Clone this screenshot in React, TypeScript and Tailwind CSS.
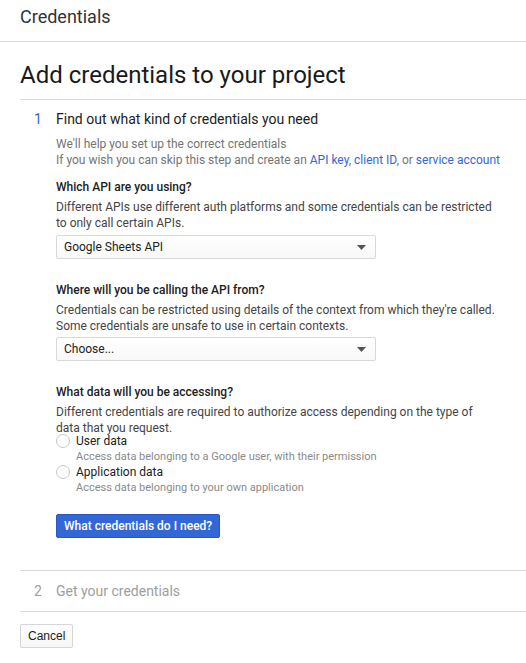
import React from 'react';

const font = { fontFamily: 'Roboto, "Noto Sans", Arial, sans-serif' };

function Select({ value }: { value: string }) {
  return (
    <div className="w-[320px] h-[24px] border border-[#d9d9d9] rounded-[2px] bg-gradient-to-b from-white to-[#f8f8f8] flex items-center justify-between pl-[7px] pr-[9px] text-[12px] text-[#222]">
      <span>{value}</span>
      <svg width="9" height="5" viewBox="0 0 9 5" aria-hidden="true">
        <path d="M0 0h9L4.5 5z" fill="#555" />
      </svg>
    </div>
  );
}

function Radio({ label, hint }: { label: string; hint: string }) {
  return (
    <div className="flex">
      <div className="w-[14px] h-[14px] mt-[1px] rounded-full border border-[#c8c8c8] bg-white shrink-0" />
      <div className="ml-[6px]">
        <div className="text-[12px] leading-[16px] text-[#212121]">{label}</div>
        <div className="text-[11px] leading-[15px] text-[#8a8a8a]">{hint}</div>
      </div>
    </div>
  );
}

export default function App() {
  return (
    <div className="w-[526px] h-[663px] bg-white overflow-hidden" style={font}>
      {/* Top bar */}
      <div className="h-[42px] border-b border-[#dadada] pl-[20px] pt-[5px]">
        <span className="text-[18px] leading-[24px] text-[#333]">Credentials</span>
      </div>

      <div className="pl-[20px]">
        <h1 className="pt-[17px] pb-[8px] text-[24px] leading-[32px] text-[#1a1a1a] border-b border-[#dadada]">
          Add credentials to your project
        </h1>

        {/* Step 1 */}
        <div className="flex pt-[9px] border-b border-[#dadada] pb-[32px]">
          <div className="w-[36px] pl-[14px] text-[14px] leading-[20px] text-[#3367d6]">1</div>
          <div className="flex-1">
            <div className="text-[14px] leading-[20px] text-[#212121]">
              Find out what kind of credentials you need
            </div>
            <div className="mt-[7px] text-[12px] leading-[16px] text-[#757575]">
              <div>We'll help you set up the correct credentials</div>
              <div>
                If you wish you can skip this step and create an{' '}
                <span className="text-[#3367d6]">API key</span>,{' '}
                <span className="text-[#3367d6]">client ID</span>, or{' '}
                <span className="text-[#3367d6]">service account</span>
              </div>
            </div>

            <div className="mt-[11px] text-[12px] leading-[16px] font-medium text-[#212121]">
              Which API are you using?
            </div>
            <div className="mt-[4px] text-[12px] leading-[16px] text-[#444] pr-[30px]">
              Different APIs use different auth platforms and some credentials can be restricted to only call certain APIs.
            </div>
            <div className="mt-[4px]">
              <Select value="Google Sheets API" />
            </div>

            <div className="mt-[23px] text-[12px] leading-[16px] font-medium text-[#212121]">
              Where will you be calling the API from?
            </div>
            <div className="mt-[4px] text-[12px] leading-[16px] text-[#444] pr-[20px]">
              Credentials can be restricted using details of the context from which they're called. Some credentials are unsafe to use in certain contexts.
            </div>
            <div className="mt-[3px]">
              <Select value="Choose..." />
            </div>

            <div className="mt-[23px] text-[12px] leading-[16px] font-medium text-[#212121]">
              What data will you be accessing?
            </div>
            <div className="mt-[4px] text-[12px] leading-[16px] text-[#444] pr-[30px]">
              Different credentials are required to authorize access depending on the type of data that you request.
            </div>
            <div className="-mt-[3px] flex flex-col">
              <Radio label="User data" hint="Access data belonging to a Google user, with their permission" />
              <Radio label="Application data" hint="Access data belonging to your own application" />
            </div>

            <button className="mt-[19px] h-[24px] px-[7px] rounded-[2px] bg-[#3367d6] border border-[#2a56c6] text-white text-[12px] font-medium">
              What credentials do I need?
            </button>
          </div>
        </div>

        {/* Step 2 */}
        <div className="flex h-[41px] items-center border-b border-[#dadada]">
          <div className="w-[36px] pl-[14px] text-[14px] text-[#9e9e9e]">2</div>
          <div className="text-[14px] text-[#9e9e9e]">Get your credentials</div>
        </div>

        <button
          className="mt-[12px] h-[24px] px-[7px] rounded-[2px] border border-[#d6d6d6] bg-gradient-to-b from-white to-[#f6f6f6] text-[12px] text-[#222]"
          style={{ fontFamily: '"Liberation Sans", Arial, sans-serif' }}
        >
          Cancel
        </button>
      </div>
    </div>
  );
}
